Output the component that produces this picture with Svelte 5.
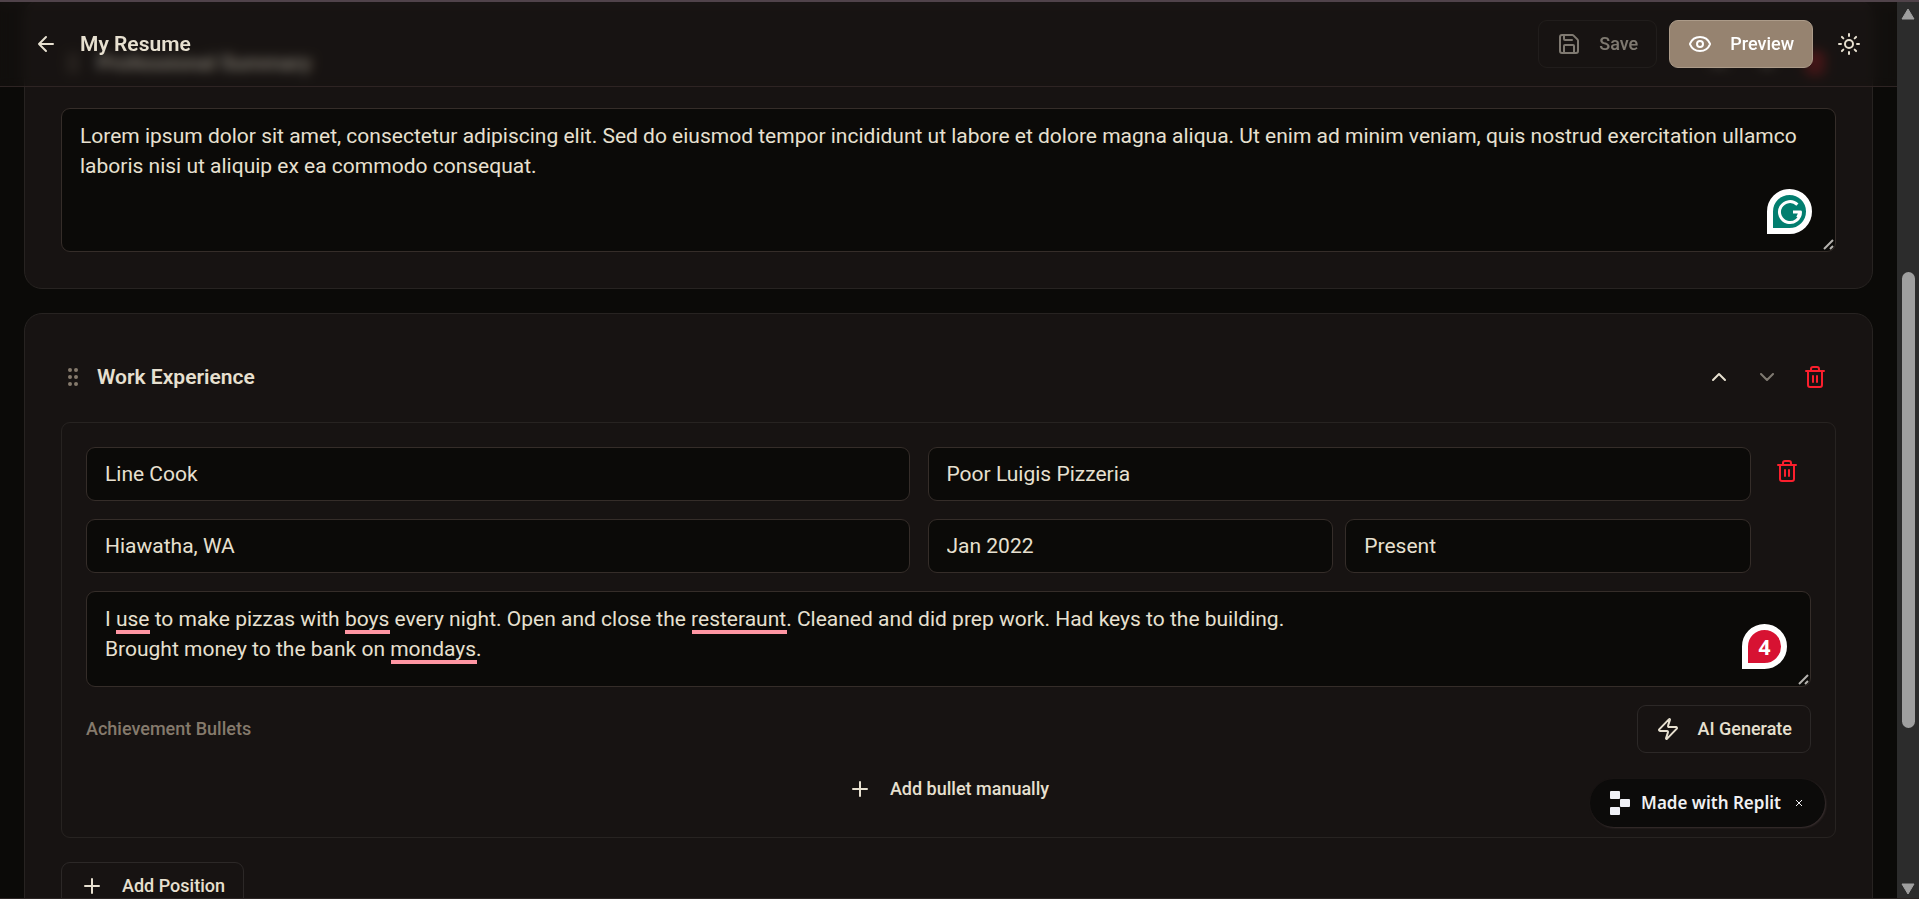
<script lang="ts">
  interface Underline {
    word: string;
    left: number;
    top: number;
    width: number;
  }

  let summary = $state(
    'Lorem ipsum dolor sit amet, consectetur adipiscing elit. Sed do eiusmod tempor incididunt ut labore et dolore magna aliqua. Ut enim ad minim veniam, quis nostrud exercitation ullamco laboris nisi ut aliquip ex ea commodo consequat.',
  );

  let position = $state({
    title: 'Line Cook',
    company: 'Poor Luigis Pizzeria',
    location: 'Hiawatha, WA',
    start: 'Jan 2022',
    end: 'Present',
    description:
      'I use to make pizzas with boys every night. Open and close the resteraunt. Cleaned and did prep work. Had keys to the building.\nBrought money to the bank on mondays.',
  });

  // Measured against the description box, one entry per flagged word.
  const underlines: Underline[] = [
    { word: 'use', left: 30, top: 39, width: 34 },
    { word: 'boys', left: 259, top: 39, width: 45 },
    { word: 'resteraunt', left: 606, top: 39, width: 95 },
    { word: 'mondays', left: 305, top: 69, width: 86 },
  ];

  // Percentages of the track.
  const thumb = { top: 29.2, height: 52.8 };

  let badgeOpen = $state(true);
</script>

{#snippet trash()}
  <svg class="icon" viewBox="0 0 24 24" aria-hidden="true">
    <path d="M3 6h18M19 6v14a2 2 0 0 1-2 2H7a2 2 0 0 1-2-2V6M8 6V4a2 2 0 0 1 2-2h4a2 2 0 0 1 2 2v2M10 11v6M14 11v6" />
  </svg>
{/snippet}

{#snippet plus()}
  <svg class="icon" viewBox="0 0 24 24" aria-hidden="true"><path d="M5 12h14M12 5v14" /></svg>
{/snippet}

{#snippet sectionHead(title: string, last: boolean)}
  <div class="section-head">
    <svg class="icon grip" viewBox="0 0 24 24" aria-hidden="true">
      <circle cx="9" cy="5" r="1" /><circle cx="9" cy="12" r="1" /><circle cx="9" cy="19" r="1" />
      <circle cx="15" cy="5" r="1" /><circle cx="15" cy="12" r="1" /><circle cx="15" cy="19" r="1" />
    </svg>
    <h2>{title}</h2>
    <div class="section-tools">
      <button type="button" class="tool" aria-label="Move {title} up">
        <svg class="icon" viewBox="0 0 24 24" aria-hidden="true"><path d="m18 15-6-6-6 6" /></svg>
      </button>
      <button type="button" class="tool" aria-label="Move {title} down" disabled={last}>
        <svg class="icon" viewBox="0 0 24 24" aria-hidden="true"><path d="m6 9 6 6 6-6" /></svg>
      </button>
      <button type="button" class="tool danger" aria-label="Delete {title}">{@render trash()}</button>
    </div>
  </div>
{/snippet}

{#snippet resizer()}
  <svg class="resizer" viewBox="0 0 12 12" aria-hidden="true"><path d="M1 10 10 1M7 10l3-3" /></svg>
{/snippet}

<div class="shell">
  <div class="workspace">
    <header class="topbar">
      <button type="button" class="tool back" aria-label="Back">
        <svg class="icon" viewBox="0 0 24 24" aria-hidden="true"><path d="m12 19-7-7 7-7M19 12H5" /></svg>
      </button>
      <h1>My Resume</h1>
      <div class="actions">
        <button type="button" class="btn save" disabled>
          <svg class="icon" viewBox="0 0 24 24" aria-hidden="true">
            <path d="M15.2 3a2 2 0 0 1 1.4.6l3.8 3.8a2 2 0 0 1 .6 1.4V19a2 2 0 0 1-2 2H5a2 2 0 0 1-2-2V5a2 2 0 0 1 2-2zM17 21v-7a1 1 0 0 0-1-1H8a1 1 0 0 0-1 1v7M7 3v4a1 1 0 0 0 1 1h7" />
          </svg>
          Save
        </button>
        <button type="button" class="btn preview">
          <svg class="icon" viewBox="0 0 24 24" aria-hidden="true">
            <path d="M2.062 12.348a1 1 0 0 1 0-.696 10.75 10.75 0 0 1 19.876 0 1 1 0 0 1 0 .696 10.75 10.75 0 0 1-19.876 0" />
            <circle cx="12" cy="12" r="3" />
          </svg>
          Preview
        </button>
        <button type="button" class="tool theme" aria-label="Toggle theme">
          <svg class="icon" viewBox="0 0 24 24" aria-hidden="true">
            <circle cx="12" cy="12" r="4" />
            <path d="M12 2v2M12 20v2m-7.07-17.07 1.41 1.41m11.32 11.32 1.41 1.41M2 12h2M20 12h2M6.34 17.66l-1.41 1.41M19.07 4.93l-1.41 1.41" />
          </svg>
        </button>
      </div>
    </header>

    <main>
      <section class="card">
        {@render sectionHead('Professional Summary', false)}
        <div class="field">
          <textarea class="summary" aria-label="Professional summary" spellcheck="false" bind:value={summary}></textarea>
          <button type="button" class="checker" aria-label="Writing suggestions">
            <svg viewBox="0 0 26 26" aria-hidden="true">
              <path d="M20.4 5.6A10.5 10.5 0 1 0 23.5 13H16M23.5 12.5l-2.8 6" />
            </svg>
          </button>
          {@render resizer()}
        </div>
      </section>

      <section class="card">
        {@render sectionHead('Work Experience', true)}
        <div class="position">
          <div class="position-top">
            <div class="grid">
              <input aria-label="Job title" bind:value={position.title} />
              <input aria-label="Company" bind:value={position.company} />
              <input aria-label="Location" bind:value={position.location} />
              <div class="dates">
                <input aria-label="Start date" bind:value={position.start} />
                <input aria-label="End date" bind:value={position.end} />
              </div>
            </div>
            <button type="button" class="tool wide danger" aria-label="Delete position">{@render trash()}</button>
          </div>

          <div class="field">
            <textarea class="description" aria-label="Description" spellcheck="false" bind:value={position.description}></textarea>
            {#each underlines as u (u.word)}
              <span
                class="underline"
                style:left="{u.left}px"
                style:top="{u.top}px"
                style:width="{u.width}px"
              ></span>
            {/each}
            <button type="button" class="checker errors" aria-label="4 writing suggestions">4</button>
            {@render resizer()}
          </div>

          <div class="bullets-head">
            <h3>Achievement Bullets</h3>
            <button type="button" class="btn">
              <svg class="icon" viewBox="0 0 24 24" aria-hidden="true">
                <path d="M4 14a1 1 0 0 1-.78-1.63l9.9-10.2a.5.5 0 0 1 .86.46l-1.92 6.02A1 1 0 0 0 13 10h7a1 1 0 0 1 .78 1.63l-9.9 10.2a.5.5 0 0 1-.86-.46l1.92-6.02A1 1 0 0 0 11 14z" />
              </svg>
              AI Generate
            </button>
          </div>
          <button type="button" class="btn ghost">{@render plus()} Add bullet manually</button>
        </div>

        <button type="button" class="btn">{@render plus()} Add Position</button>
      </section>
    </main>

    {#if badgeOpen}
      <div class="badge">
        <a href="#replit">
          <svg viewBox="0 0 20 24" aria-hidden="true">
            <rect width="10" height="8" rx="1" />
            <rect x="10" y="8" width="10" height="8" rx="1" />
            <rect y="16" width="10" height="8" rx="1" />
          </svg>
          Made with Replit
        </a>
        <button type="button" aria-label="Dismiss" onclick={() => (badgeOpen = false)}>
          <svg viewBox="0 0 8 8" aria-hidden="true"><path d="m1 1 6 6M7 1 1 7" /></svg>
        </button>
      </div>
    {/if}
  </div>

  <div class="scrollbar" aria-hidden="true">
    <svg viewBox="0 0 16 12"><path d="M8 1 14 11H2z" /></svg>
    <div class="track">
      <div class="thumb" style:top="{thumb.top}%" style:height="{thumb.height}%"></div>
    </div>
    <svg viewBox="0 0 16 12"><path d="M2 1h12L8 11z" /></svg>
  </div>
</div>

<style>
  :global(body) {
    background: #0c0a09;
  }
  .shell {
    --bg: #0b0a08;
    --card: #171312;
    --line: #272321;
    --input-line: #352d29;
    --text: #e7e0d0;
    --muted: #857a6c;
    --red: #fb1f2d;
    box-sizing: border-box;
    display: grid;
    grid-template-columns: 1fr 22px;
    height: 100vh;
    overflow: hidden;
    border-top: 2px solid #50434a;
    border-bottom: 1px solid #2b2524;
    background: var(--bg);
    color: var(--text);
    font-family: Roboto, 'Liberation Sans', sans-serif;
    font-size: 21px;
    line-height: 30px;
  }
  .shell :global(*) {
    box-sizing: border-box;
  }
  .workspace {
    position: relative;
    min-width: 0;
    overflow: hidden;
  }
  h1,
  h2,
  h3 {
    margin: 0;
    font-size: 21px;
    font-weight: 600;
  }
  button,
  input,
  textarea {
    font: inherit;
    color: inherit;
  }
  button {
    cursor: pointer;
  }
  .icon {
    flex: none;
    width: 24px;
    height: 24px;
    fill: none;
    stroke: currentColor;
    stroke-width: 2;
    stroke-linecap: round;
    stroke-linejoin: round;
  }

  .topbar {
    position: absolute;
    inset: 0 0 auto;
    z-index: 2;
    display: flex;
    align-items: center;
    gap: 12px;
    padding: 18px 24px;
    border-bottom: 1px solid #2e2423;
    background: rgba(23, 19, 18, 0.5);
    backdrop-filter: blur(6px);
  }
  .actions {
    display: flex;
    gap: 12px;
    margin-left: auto;
  }

  .btn {
    display: inline-flex;
    align-items: center;
    justify-content: center;
    gap: 18px;
    height: 48px;
    padding: 0 18px;
    border: 1px solid #2c2827;
    border-radius: 9px;
    background: transparent;
    font-size: 18px;
    font-weight: 500;
    white-space: nowrap;
  }
  .btn.save {
    opacity: 0.5;
  }
  .btn.preview {
    border-color: #ac9b89;
    background: #968370;
    color: #fff;
  }
  .btn.ghost {
    width: 100%;
    border-color: transparent;
  }
  .tool {
    display: inline-flex;
    align-items: center;
    justify-content: center;
    width: 42px;
    height: 48px;
    padding: 0;
    border: 0;
    background: transparent;
  }
  .tool:disabled {
    opacity: 0.5;
  }
  .tool.back {
    width: 44px;
  }
  .tool.theme,
  .tool.wide {
    width: 48px;
  }
  .danger {
    color: var(--red);
  }

  main {
    display: flex;
    flex-direction: column;
    gap: 24px;
    margin-top: -3px;
    padding: 0 24px;
  }
  .card {
    padding: 36px;
    border: 1px solid var(--line);
    border-radius: 18px;
    background: var(--card);
  }
  .section-head {
    display: flex;
    align-items: center;
    gap: 12px;
    height: 54px;
    margin-bottom: 18px;
  }
  .section-tools {
    display: flex;
    gap: 6px;
    margin-left: auto;
  }
  .grip {
    color: var(--muted);
  }

  input,
  textarea {
    display: block;
    width: 100%;
    min-width: 0;
    margin: 0;
    padding: 12px 18px;
    border: 1px solid var(--input-line);
    border-radius: 9px;
    outline: none;
    background: var(--bg);
  }
  input {
    height: 54px;
  }
  textarea {
    resize: none;
    overflow: hidden;
  }
  .summary {
    height: 144px;
  }
  .description {
    height: 96px;
  }
  .field {
    position: relative;
  }
  .resizer {
    position: absolute;
    right: 1px;
    bottom: 1px;
    width: 12px;
    height: 12px;
    fill: none;
    stroke: #b5b2ae;
    stroke-width: 2;
  }
  .underline {
    position: absolute;
    height: 4px;
    background: #ff96a3;
    pointer-events: none;
  }
  .checker {
    position: absolute;
    right: 24px;
    bottom: 18px;
    display: grid;
    place-items: center;
    width: 45px;
    height: 45px;
    padding: 0;
    border: 6px solid #fff;
    border-radius: 50% 50% 50% 0;
    background: #027e6f;
    color: #fff;
  }
  .checker svg {
    width: 26px;
    height: 26px;
    fill: none;
    stroke: #fff;
    stroke-width: 3;
    stroke-linejoin: round;
  }
  .checker.errors {
    background: #d71232;
    font-family: 'Noto Sans', sans-serif;
    font-weight: 700;
  }

  .position {
    display: flex;
    flex-direction: column;
    gap: 18px;
    margin-bottom: 24px;
    padding: 24px;
    border: 1px solid var(--line);
    border-radius: 9px;
  }
  .position-top {
    display: flex;
    align-items: flex-start;
    gap: 12px;
  }
  .grid {
    display: grid;
    flex: 1;
    grid-template-columns: 1fr 1fr;
    gap: 18px;
  }
  .dates {
    display: flex;
    gap: 12px;
  }
  .bullets-head {
    display: flex;
    align-items: center;
    justify-content: space-between;
    margin-bottom: -6px;
  }
  h3 {
    color: var(--muted);
    font-size: 18px;
    font-weight: 500;
  }

  .badge {
    position: absolute;
    right: 72px;
    bottom: 71px;
    z-index: 3;
    display: flex;
    align-items: center;
    gap: 12px;
    height: 48px;
    padding: 0 20px;
    border-radius: 24px;
    background: #0c0b0a;
    box-shadow: 1px 1px 2px #3a3030;
    color: #f0f0f2;
    font-family: 'Noto Sans', 'Open Sans', sans-serif;
    font-size: 17px;
    font-weight: 600;
  }
  .badge a {
    display: flex;
    align-items: center;
    gap: 11px;
    color: inherit;
    text-decoration: none;
    white-space: nowrap;
  }
  .badge a svg {
    width: 20px;
    height: 24px;
    fill: #f0f1f6;
  }
  .badge button {
    display: flex;
    padding: 2px;
    border: 0;
    background: transparent;
  }
  .badge button svg {
    width: 8px;
    height: 8px;
    fill: none;
    stroke: currentColor;
  }

  .scrollbar {
    display: flex;
    flex-direction: column;
    align-items: center;
    padding: 6px 0 3px;
    background: #2c2c2c;
  }
  .scrollbar svg {
    width: 16px;
    height: 12px;
    fill: #9f9f9f;
    stroke: #9f9f9f;
    stroke-width: 1;
    stroke-linejoin: round;
  }
  .track {
    position: relative;
    flex: 1;
    width: 13px;
  }
  .thumb {
    position: absolute;
    width: 100%;
    border-radius: 7px;
    background: #9f9f9f;
  }
</style>
